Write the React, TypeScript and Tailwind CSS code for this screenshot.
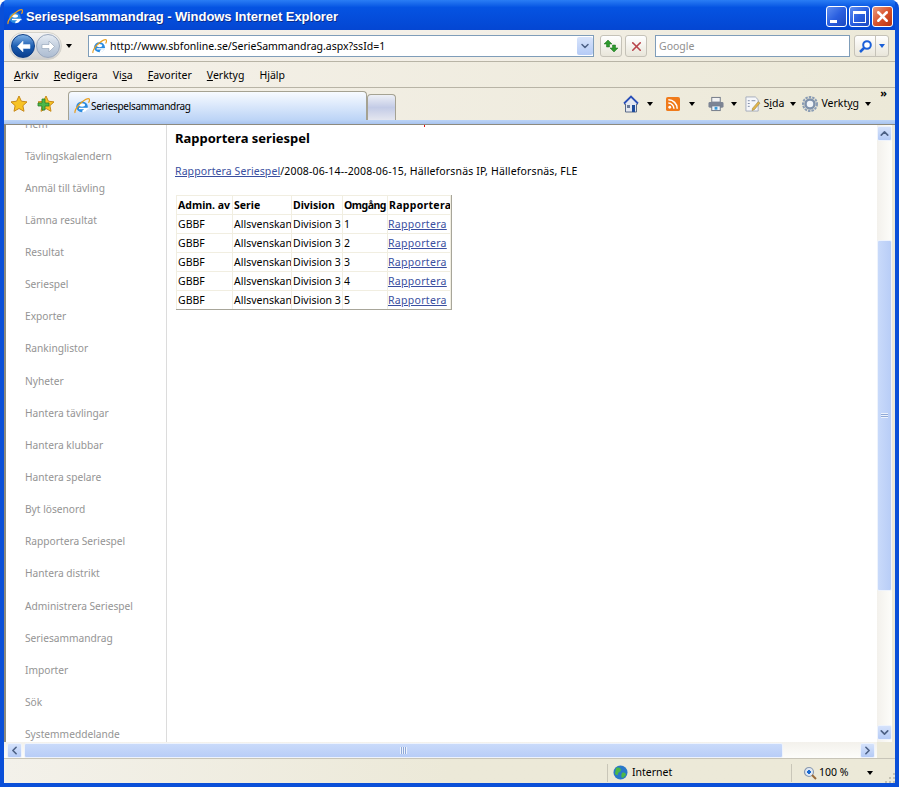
import { ChevronDown, ChevronUp, ChevronLeft, ChevronRight, X } from "lucide-react";

const font = "font-['Noto_Sans','DejaVu_Sans',sans-serif]";

const sideItems = [
  "Hem",
  "Tävlingskalendern",
  "Anmäl till tävling",
  "Lämna resultat",
  "Resultat",
  "Seriespel",
  "Exporter",
  "Rankinglistor",
  "Nyheter",
  "Hantera tävlingar",
  "Hantera klubbar",
  "Hantera spelare",
  "Byt lösenord",
  "Rapportera Seriespel",
  "Hantera distrikt",
  "Administrera Seriespel",
  "Seriesammandrag",
  "Importer",
  "Sök",
  "Systemmeddelande",
];

const rows = ["1", "2", "3", "4", "5"];

const IeIcon = ({ size = 16 }: { size?: number }) => (
  <svg width={size} height={size} viewBox="0 0 16 16" className="shrink-0">
    <ellipse cx="8" cy="8.800" rx="5.800" ry="5.400" fill="#2a8be0" />
    <ellipse cx="8" cy="7" rx="3" ry="1.700" fill="white" />
    <path d="M10 11h3.500c-.8 2-2.800 3.300-5.300 3.300l.3-2c.6 0 1.100-.5 1.500-1.300z" fill="white" />
    <rect x="5" y="9.800" width="9.500" height="1.400" fill="white" />
    <path d="M1.200 14.800C-.1 13 4 7 8 4c3.500-2.600 6.200-3.800 7.200-3 .6.600.2 2.200-.7 3.800" fill="none" stroke="#e9a020" strokeWidth="1.300" />
  </svg>
);

const Arrow = ({ className = "" }: { className?: string }) => (
  <span className={`inline-block h-0 w-0 border-x-[3.5px] border-t-[4px] border-x-transparent border-t-black ${className}`} />
);

const Star = ({ plus = false }: { plus?: boolean }) => (
  <svg width="18" height="18" viewBox="0 0 18 18">
    <path d="M9 1l2.400 5.200 5.600.7-4.100 3.800 1.100 5.600L9 13.500l-5 2.800 1.100-5.600L1 6.900l5.600-.7z" fill="#f7c325" stroke="#c88a18" strokeWidth="1" />
    {plus && <path d="M2 11h4V7h3v4h4v3H9v4H6v-4H2z" transform="translate(-1 -3)" fill="#4cb848" stroke="#2c7f2c" strokeWidth="0.800" />}
  </svg>
);

const NavArrow = ({ dir, active }: { dir: "back" | "forward"; active: boolean }) => (
  <div className={`flex h-[24px] w-[24px] items-center justify-center rounded-full border ${active ? "border-[#0c3e86] bg-gradient-to-b from-[#7fb2e6] via-[#1d5fb3] to-[#0b3f8f]" : "border-[#9aa8bd] bg-gradient-to-b from-[#e6ecf4] via-[#c4d0df] to-[#aebdd2]"}`}>
    <svg width="15" height="13" viewBox="0 0 15 13" className={dir === "forward" ? "rotate-180" : ""}>
      <path d="M7 1L1.500 6.500 7 12V8.500h7v-4H7z" fill="white" stroke={active ? "#dce9f8" : "#8d9db3"} strokeWidth="0.600" />
    </svg>
  </div>
);

const ToolButton = ({ children, className = "" }: { children: React.ReactNode; className?: string }) => (
  <div className={`flex h-[22px] w-[22px] items-center justify-center rounded-[3px] border border-[#c5c2b8] bg-gradient-to-b from-white to-[#e9e6da] ${className}`}>
    {children}
  </div>
);

const WindowButton = ({ children, red = false }: { children: React.ReactNode; red?: boolean }) => (
  <div className={`flex h-[21px] w-[21px] items-center justify-center rounded-[3px] border border-white ${red ? "bg-gradient-to-br from-[#e89a7e] via-[#d9532c] to-[#b8330f]" : "bg-gradient-to-br from-[#5f8df0] via-[#2a5fe0] to-[#1c48c0]"}`}>
    {children}
  </div>
);

const ScrollButton = ({ children }: { children: React.ReactNode }) => (
  <div className="flex h-[15px] w-[15px] shrink-0 items-center justify-center rounded-[2px] border border-[#eef3fc] bg-gradient-to-b from-[#d5e2fb] to-[#b5cbf6] text-[#4d6185]">
    {children}
  </div>
);

const Underlined = ({ text, at }: { text: string; at: number }) => (
  <span>
    {text.slice(0, at)}
    <span className="underline">{text[at]}</span>
    {text.slice(at + 1)}
  </span>
);

const TopChrome = () => (
  <>
    <div className="flex h-[30px] items-center bg-gradient-to-b from-[#2a7df5] from-0% via-[#0553e2] via-25% to-[#0446d2] pl-[3px] pr-[2px] pt-[3px]">
      <IeIcon size={16} />
      <span className="ml-[3px] mt-[1px] whitespace-nowrap font-['Liberation_Sans',sans-serif] text-[13px] font-bold tracking-[-0.06px] text-white [text-shadow:1px_1px_0_#0a2c8a]">
        Seriespelsammandrag - Windows Internet Explorer
      </span>
      <div className="ml-auto flex gap-[2px]">
        <WindowButton>
          <span className="mt-[9px] mr-[6px] h-[3px] w-[7px] bg-white" />
        </WindowButton>
        <WindowButton>
          <span className="h-[12px] w-[13px] border border-t-[3px] border-white" />
        </WindowButton>
        <WindowButton red>
          <X size={17} strokeWidth={3.5} color="white" />
        </WindowButton>
      </div>
    </div>
    <div className="flex h-[32px] items-center border-b border-[#b8b4a6] bg-gradient-to-r from-[#f3efe7] via-[#f4f0e8] to-[#ece9d8] pl-[5px] pt-[1px]">
      <div className="flex w-[76px] items-center">
        <div className="flex h-[28px] items-center gap-[1px] rounded-full border border-[#d4d2ca] bg-gradient-to-b from-[#f4f4f4] to-[#cfcfcf] px-[1px]">
          <NavArrow dir="back" active />
          <NavArrow dir="forward" active={false} />
        </div>
        <Arrow className="ml-[4px]" />
      </div>
      <div className="ml-[3px] flex h-[22px] w-[506px] items-center border border-[#7f9db9] bg-white pl-[3px] pr-0">
        <IeIcon size={15} />
        <span className={`ml-[3px] mt-[2px] text-[10.500px] text-black ${font}`}>http://www.sbfonline.se/SerieSammandrag.aspx?ssId=1</span>
        <div className="ml-auto flex h-[18px] w-[16px] items-center justify-center rounded-[2px] bg-gradient-to-b from-[#d8e4fb] to-[#b5cbf6] text-[#4d6185]">
          <ChevronDown size={12} strokeWidth={3} />
        </div>
      </div>
      <ToolButton className="ml-[6px]">
        <svg width="16" height="14" viewBox="0 0 16 14">
          <path d="M5 1L1 5h2.500v3h3V5H9zM11 13l4-4h-2.500V6h-3v3H7z" fill="#2c9a2c" stroke="#1c6c1c" strokeWidth="0.500" />
        </svg>
      </ToolButton>
      <ToolButton className="ml-[3px]">
        <X size={15} strokeWidth={2.5} color="#b8434a" />
      </ToolButton>
      <div className={`ml-[8px] flex h-[22px] w-[195px] items-center border border-[#7f9db9] bg-white pl-[3px] pt-[2px] text-[10.500px] text-[#8f8f8f] ${font}`}>
        Google
      </div>
      <div className="ml-[4px] flex h-[22px] w-[35px] rounded-[3px] border border-[#c5c2b8] bg-gradient-to-b from-white to-[#e9e6da]">
        <div className="flex w-[21px] items-center justify-center border-r border-[#c5c2b8]">
          <svg width="15" height="15" viewBox="0 0 15 15">
            <circle cx="9" cy="6" r="3.800" fill="white" stroke="#1a5fd8" strokeWidth="2" />
            <path d="M6 9l-4 4" stroke="#1a5fd8" strokeWidth="2.500" />
          </svg>
        </div>
        <div className="flex flex-1 items-center justify-center">
          <span className="h-0 w-0 border-x-[3.5px] border-t-[4px] border-x-transparent border-t-[#1a5fd8]" />
        </div>
      </div>
    </div>
    <div className={`flex h-[26px] items-center gap-[15px] border-b border-[#b8b4a6] bg-gradient-to-r from-[#f5f1ea] to-[#ece9d8] pl-[10px] pt-[3px] text-[10.500px] text-black ${font}`}>
      <Underlined text="Arkiv" at={0} />
      <Underlined text="Redigera" at={0} />
      <Underlined text="Visa" at={2} />
      <Underlined text="Favoriter" at={0} />
      <Underlined text="Verktyg" at={0} />
      <Underlined text="Hjälp" at={1} />
    </div>
    <div className="flex h-[32px] items-end bg-gradient-to-r from-[#f5f1ea] to-[#ece9d8]">
      <div className="mb-[7px] ml-[6px] flex gap-[9px]">
        <Star />
        <Star plus />
      </div>
      <div className={`ml-[13px] flex h-[29px] w-[299px] items-center rounded-t-[4px] border border-b-0 border-[#a5a292] bg-gradient-to-b from-[#f8fbff] to-[#bcd4f6] pl-[5px] text-[10px] tracking-[-0.3px] text-black ${font}`}>
        <IeIcon size={16} />
        <span className="ml-[1px]">Seriespelsammandrag</span>
      </div>
      <div className="h-[26px] w-[29px] rounded-t-[4px] border border-b-0 border-[#a5a292] bg-gradient-to-b from-[#eef0f6] via-[#c3cbe6] to-[#e4e6ef]" />
      <div className={`relative mb-[7px] ml-auto mr-[6px] flex items-center text-[10.500px] text-black ${font}`}>
        <svg width="18" height="18" viewBox="0 0 18 18" className="-ml-[2px]">
          <path d="M9 2L2 9h1.500v8h11V9H16z" fill="#e4e8f0" stroke="#5a6a88" />
          <path d="M2 8.500l7-7 7 7" fill="none" stroke="#2a50b8" strokeWidth="1.800" />
          <path d="M10 10h3v7h-3z" fill="#1d4c9c" />
          <path d="M5 10h3v3H5z" fill="#6a7a98" />
        </svg>
        <Arrow className="ml-[7.500px]" />
        <svg width="14" height="14" viewBox="0 0 15 15" className="ml-[12.500px]">
          <rect width="15" height="15" rx="2" fill="#f07a1a" />
          <circle cx="4" cy="11" r="1.500" fill="white" />
          <path d="M2.500 6.500a6 6 0 0 1 6 6M2.500 3a9.500 9.500 0 0 1 9.500 9.500" fill="none" stroke="white" strokeWidth="1.600" />
        </svg>
        <Arrow className="ml-[9.500px]" />
        <svg width="16" height="16" viewBox="0 0 17 16" className="ml-[12.500px]">
          <rect x="4" y="1" width="9" height="5" fill="#f2f2f2" stroke="#6e7684" />
          <rect x="0.500" y="6" width="16" height="6" rx="1.500" fill="#7c8494" />
          <rect x="4" y="10" width="9" height="5" fill="#eef4fa" stroke="#6e7684" />
          <rect x="7" y="11" width="3" height="3" fill="#3a9ad8" />
        </svg>
        <Arrow className="ml-[7.500px]" />
        <svg width="16" height="16" viewBox="0 0 17 17" className="ml-[7.500px]">
          <path d="M1 1h10l3 3v12H1z" fill="#f6f7fa" stroke="#a4acbc" />
          <path d="M3 5h2M3 8h2M3 11h2M7 5h4" stroke="#7c8aa4" />
          <path d="M8 13l6-7 2 1.500-6 7-2.500 1z" fill="#e2b54a" stroke="#8a7a40" strokeWidth="0.500" />
        </svg>
        <span className="ml-[3px]"><Underlined text="Sida" at={1} /></span>
        <Arrow className="ml-[5.500px]" />
        <svg width="16" height="16" viewBox="0 0 16 16" className="ml-[6.500px]">
          <circle cx="8" cy="8" r="7" fill="none" stroke="#8a9cb4" strokeWidth="2" strokeDasharray="2.500 1" />
          <circle cx="8" cy="8" r="4.500" fill="#f0f4f8" stroke="#7f92ac" strokeWidth="2.500" />
        </svg>
        <span className="ml-[3px]"><Underlined text="Verktyg" at={5} /></span>
        <Arrow className="ml-[6px] mr-[18px]" />
        <span className="absolute -top-[8px] right-[2px] text-[11px] font-bold leading-none">»</span>
      </div>
    </div>
    <div className="h-[5px] border-b border-[#8d8a7e] bg-gradient-to-b from-[#bcd4f6] to-[#a9c4ef]" />
  </>
);

const Sidebar = () => (
  <div className={`w-[161px] shrink-0 overflow-hidden border-r border-[#dcdcdc] bg-white pl-[19px] text-[10.200px] text-[#949494] ${font}`}>
    <div className="-mt-[8.500px] flex flex-col gap-[17.150px]">
      {sideItems.map((item) => (
        <div key={item} className="h-[15px] whitespace-nowrap leading-[15px]">
          {item}
        </div>
      ))}
    </div>
  </div>
);

const ReportTable = () => {
  const cell = "border-b border-r border-[#f1eee1] px-[1px] h-[19px] whitespace-nowrap overflow-hidden";
  return (
    <div className="mt-[16px] ml-[1px] h-[115px] w-[276px] overflow-hidden border-b border-r border-[#a8a69a]">
      <table className="w-full table-fixed border-collapse border-l border-t border-[#f1eee1] text-[10.500px] leading-none text-black">
        <thead>
          <tr className="font-bold">
            <th className={`${cell} w-[56px] text-left`}>Admin. av</th>
            <th className={`${cell} w-[59px] text-left`}>Serie</th>
            <th className={`${cell} w-[51px] text-left`}>Division</th>
            <th className={`${cell} w-[45px] text-left tracking-[-0.5px]`}>Omgång</th>
            <th className={`${cell} text-left tracking-[0.3px]`}>Rapportera</th>
          </tr>
        </thead>
        <tbody>
          {rows.map((r) => (
            <tr key={r}>
              <td className={cell}>GBBF</td>
              <td className={cell}>Allsvenskan</td>
              <td className={cell}>Division 3</td>
              <td className={cell}>{r}</td>
              <td className={cell}>
                <a className="-ml-[1px] tracking-[0.3px] text-[#3a4fa0] underline">Rapportera</a>
              </td>
            </tr>
          ))}
        </tbody>
      </table>
    </div>
  );
};

const Page = () => (
  <div className={`relative flex-1 overflow-hidden bg-white pl-[8px] pt-[5px] ${font}`}>
    <span className="absolute left-[257px] top-0 h-[2px] w-[1px] bg-[#e01010]" />
    <h1 className="text-[13px] font-bold leading-[17px] text-black">Rapportera seriespel</h1>
    <p className="mt-[16px] text-[10.500px] leading-[16px] text-black">
      <a className="tracking-[0.1px] text-[#3a4fa0] underline">Rapportera Seriespel</a>
      <span className="tracking-[0.15px]">/2008-06-14--2008-06-15, Hälleforsnäs IP, Hälleforsnäs, FLE</span>
    </p>
    <ReportTable />
  </div>
);

const VScroll = () => (
  <div className="flex w-[18px] shrink-0 flex-col border-r-[3px] border-[#ece9d8] bg-gradient-to-r from-[#f3f1ec] to-[#fdfdfa] pb-[2px] pt-[1px]">
    <ScrollButton>
      <ChevronUp size={13} strokeWidth={3} />
    </ScrollButton>
    <div className="mt-[99px] flex h-[351px] w-[15px] items-center justify-center rounded-[2px] border border-[#eef3fc] bg-gradient-to-r from-[#c9dafa] to-[#b8cdf7]">
      <span className="h-[5px] w-[7px] bg-[repeating-linear-gradient(to_bottom,#eef3fc_0,#eef3fc_1px,#8fa9d8_1px,#8fa9d8_2px)]" />
    </div>
    <div className="mt-auto">
      <ScrollButton>
        <ChevronDown size={13} strokeWidth={3} />
      </ScrollButton>
    </div>
  </div>
);

const HScroll = () => (
  <div className="flex h-[17px] shrink-0 items-center border-b border-[#c8c5b8] bg-gradient-to-b from-[#f3f1ec] to-[#fdfdfa] pl-[3px]">
    <ScrollButton>
      <ChevronLeft size={13} strokeWidth={3} />
    </ScrollButton>
    <div className="ml-[2px] flex h-[15px] w-[759px] items-center justify-center rounded-[2px] border border-[#eef3fc] bg-gradient-to-b from-[#c9dafa] to-[#b8cdf7]">
      <span className="h-[7px] w-[7px] bg-[repeating-linear-gradient(to_right,#eef3fc_0,#eef3fc_1px,#8fa9d8_1px,#8fa9d8_2px)]" />
    </div>
    <div className="ml-[77px]">
      <ScrollButton>
        <ChevronRight size={13} strokeWidth={3} />
      </ScrollButton>
    </div>
    <div className="ml-auto h-[16px] w-[18px] bg-[#ece9d8]" />
  </div>
);

const StatusBar = () => (
  <div className={`flex flex-1 items-center bg-gradient-to-r from-[#f3f1ea] via-[#ece9d8] to-[#ece9d8] pt-[3px] text-[10.500px] text-black ${font}`}>
    <div className="ml-[603px] h-[18px] border-l border-[#c9c6b8]" />
    <svg width="15" height="15" viewBox="0 0 15 15" className="ml-[5px]">
      <circle cx="7.500" cy="7.500" r="7" fill="#2a78c8" />
      <path d="M3 3c3-1 5 0 5 2s-3 2-3 4-2 1-3 0zM9 8c2-1 4 0 4 2l-3 3c-2 0-2-3-1-5z" fill="#4db848" />
    </svg>
    <span className="ml-[4px] w-[40px] whitespace-nowrap">Internet</span>
    <div className="ml-[119px] h-[18px] border-l border-[#c9c6b8]" />
    <svg width="14" height="14" viewBox="0 0 14 14" className="ml-[11px]">
      <circle cx="6" cy="6" r="4.500" fill="#dfe8f4" stroke="#8a9ab0" strokeWidth="1.200" />
      <path d="M4 6h4M6 4v4" stroke="#1c6ad0" strokeWidth="2" />
      <path d="M9 9l4 4" stroke="#9a6a3a" strokeWidth="2" />
    </svg>
    <span className="ml-[2px] whitespace-nowrap">100 %</span>
    <Arrow className="ml-[19px]" />
    <svg width="11" height="11" viewBox="0 0 11 11" className="ml-auto mt-[10px]">
      <path d="M9 1h2v2H9zM5 5h2v2H5zM9 5h2v2H9zM1 9h2v2H1zM5 9h2v2H5zM9 9h2v2H9z" fill="#c4c1b2" />
    </svg>
  </div>
);

export default function App() {
  return (
    <div className="flex h-[787px] w-[899px] flex-col overflow-hidden rounded-t-[8px] bg-[#0a4fd8] px-[4px] pb-[4px]">
      <TopChrome />
      <div className="flex min-h-0 flex-1 flex-col bg-[#ece9d8]">
        <div className="flex h-[617px] shrink-0 border-l-2 border-[#8d8a7e]">
          <Sidebar />
          <Page />
          <VScroll />
        </div>
        <HScroll />
        <StatusBar />
      </div>
    </div>
  );
}
